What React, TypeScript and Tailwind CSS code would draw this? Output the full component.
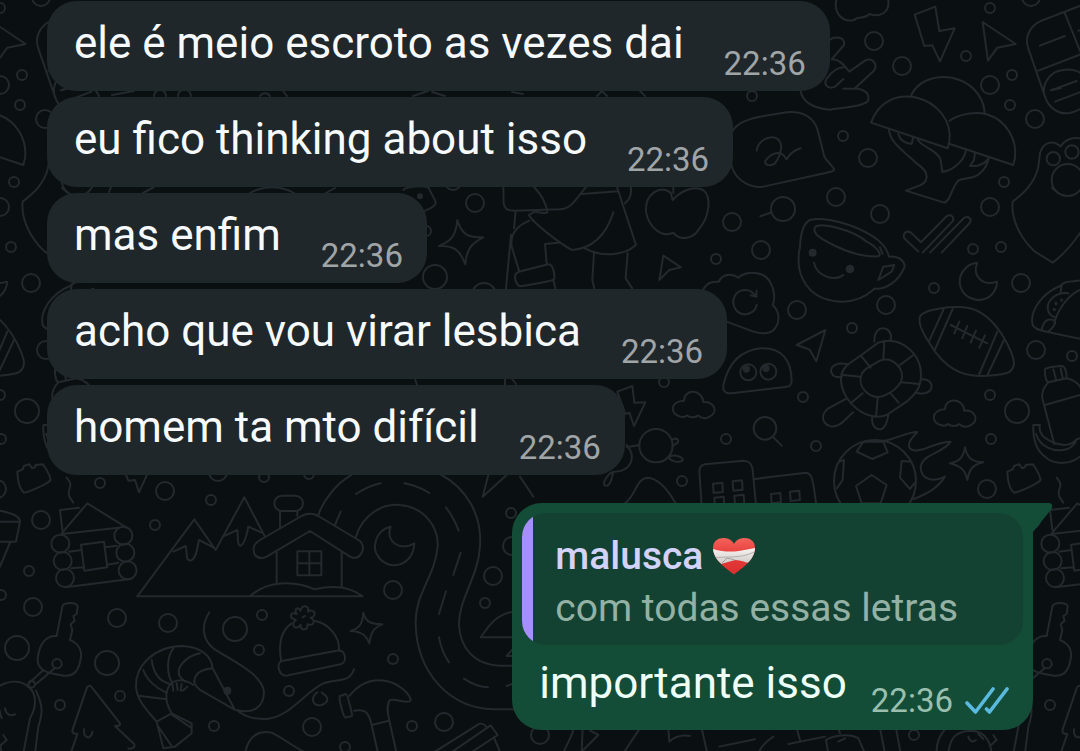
import type { ReactNode } from 'react'

type Message = {
  id: number
  text: string
  time: string
}

const received: Message[] = [
  { id: 1, text: 'ele é meio escroto as vezes dai', time: '22:36' },
  { id: 2, text: 'eu fico thinking about isso', time: '22:36' },
  { id: 3, text: 'mas enfim', time: '22:36' },
  { id: 4, text: 'acho que vou virar lesbica', time: '22:36' },
  { id: 5, text: 'homem ta mto difícil', time: '22:36' },
]

// cx, cy, r
const bubbles = [
  [874, 41, 9], [902, 66, 9], [990, 8, 5], [966, 56, 5], [1012, 75, 5], [990, 85, 9], [1010, 105, 5], [1035, 119, 9],
  [1004, 182, 5], [990, 207, 9], [843, 136, 5], [868, 158, 9], [836, 197, 9], [880, 214, 9], [783, 209, 12], [732, 222, 9],
  [752, 96, 5], [761, 250, 9], [1031, -3, 9], [973, 249, 5], [1001, 247, 5], [797, 310, 9], [886, 305, 9], [852, 328, 5],
  [934, 288, 5], [1021, 283, 9], [1036, 350, 9], [1072, 356, 5], [990, 395, 5], [1017, 411, 12], [991, 439, 5],
  [987, 489, 9], [803, 397, 5], [816, 446, 5], [726, 439, 5], [475, 203, 9], [435, 277, 12], [716, 259, 5], [426, 231, 5],
  [664, 382, 5], [484, 295, 12], [453, 182, 8], [165, 491, 9], [100, 483, 5], [211, 500, 5], [155, 525, 5], [41, 520, 9],
  [29, 571, 5], [1, 595, 5], [33, 607, 9], [117, 618, 9], [168, 623, 9], [235, 629, 12], [17, 648, 12], [107, 663, 12],
  [120, 696, 5], [60, 705, 5], [214, 726, 5], [262, 615, 5], [259, 650, 5], [218, 472, 9], [264, 477, 5], [393, 590, 9],
  [393, 659, 5], [289, 691, 5], [312, 727, 9], [345, 747, 5], [412, 726, 5], [444, 722, 9], [493, 576, 9], [485, 603, 5],
  [511, 513, 5], [512, 546, 9], [309, 474, 5], [682, 481, 5], [540, 735, 9], [914, 735, 5],
]

function Sheet({ x, y, children }: { x: number; y: number; children: ReactNode }) {
  return (
    <g transform={`translate(${x} ${y}) scale(0.3333)`} strokeWidth="6">
      {children}
    </g>
  )
}

function Wallpaper() {
  return (
    <svg aria-hidden="true" className="absolute inset-0 h-full w-full text-[#23292d]" fill="none" stroke="currentColor" strokeLinecap="round" strokeLinejoin="round">
      <g id="doodles">
        <g strokeWidth="2">
          {bubbles.map(([cx, cy, r]) => (
            <circle key={`${cx}-${cy}`} cx={cx} cy={cy} r={r} />
          ))}
          <path d="M62 90l9-2M96 91l3 5M112 95l22-4M154 96a6 6 0 0 1 12 0M178 96a6 6 0 0 1 13 0M260 96a6 6 0 0 1 10 0M283 91l4 5M413 96l15-5M432 92l13 4M512 92l11 2M597 96l5-5 5 5M640 91l5 5M62 188l6 5M111 187l-2 5M143 193l11-6M250 193a45 45 0 0 1 44 0M326 193l9-5M415 379l2 6M505 379v6M512 379l4 5" />
        </g>

        <Sheet x={720} y={0}>
          {/* cloud, bolt, arrow */}
          <path d="M350-5C338 42 370 68 402 60C415 48 435 58 448 42C475 52 510 42 505 0" />
          <path d="M584 44L646 20 658 93 704 85 660 184 637 136 613 138ZM788 66L887 132 832 143 804 182Z" />
          {/* hand */}
          <path d="M325 122C345 105 378 112 372 135L335 178C355 175 372 195 388 215L435 182C458 170 476 195 460 214L405 265C430 268 452 278 444 303C430 318 380 322 330 329C285 325 250 308 242 275M370 266H405M370 237L345 260C322 270 310 252 320 236C335 215 350 202 372 202" />
          {/* note bubble */}
          <path d="M33 402C45 375 70 360 120 350L200 337C250 332 283 355 293 390L313 470C320 485 338 495 343 510C335 517 330 515 320 518L130 560C80 566 35 530 32 480M110 452C115 420 150 405 170 415C195 430 180 470 165 490C150 500 133 495 136 483C150 462 175 452 190 465L200 478C210 460 225 450 242 445" />
          {/* mushrooms */}
          <path d="M453 368C475 305 530 282 585 292C655 308 697 365 688 425L683 445ZM572 290C590 245 640 225 695 233C750 243 790 285 794 338M688 363C720 340 770 335 800 343C860 360 892 420 885 475L880 495 690 432" />
          <path d="M507 390C510 430 560 460 590 490C635 520 625 550 590 560L558 572 672 608C692 605 695 560 715 542C735 530 760 540 780 520C795 508 802 495 806 475M593 418C600 440 655 450 662 480L667 516C700 510 730 485 738 452M535 402C540 420 555 430 575 432L579 415M765 460L762 480 750 498C775 500 795 490 806 475M121 649L155 637" />
          <path d="M595 755L553 715C547 700 560 690 573 698L603 727 680 649C693 640 706 653 697 665L608 758M630 758L731 655C743 645 758 657 749 669L665 758" />
          {/* paw */}
          <path d="M1090 418C1055 405 1030 425 1022 440C1000 418 970 425 960 460L955 500C945 550 910 580 878 605C872 660 905 720 945 755L998 788C1030 765 1060 730 1090 685" />
          <circle cx="1000" cy="476" r="20" />
          <circle cx="1056" cy="456" r="20" />
          <circle cx="1043" cy="540" r="48" />
          {/* pills */}
          <path d="M1090 14L965 62C930 77 913 110 925 145L975 290C985 322 1015 345 1050 339C1065 335 1080 330 1090 320M1035 40L1085 165M960 137L1035 108M955 212L1090 160M972 280C968 245 995 212 1030 210C1055 205 1075 212 1090 225M992 271L1070 243M1005 305L1085 275M1075 92L1090 87" />
        </Sheet>

        <Sheet x={720} y={250}>
          {/* mug */}
          <path d="M240-5C240-50 252-82 270-90C310-102 400-78 460-40C490-20 503 0 507 20M285-68C300-85 400-60 440-25C470-10 488 15 475 19C430 22 380 5 340-15C310-30 275-48 285-68ZM240-10C225 60 250 120 310 145C370 165 420 155 462 118M507 20C540 18 560 38 552 55C535 92 500 120 462 116M490 50L523 45 515 65 475 90ZM282 38C290 80 345 95 370 75M480-8L488 12" />
          <circle cx="278" cy="8" r="9" fill="currentColor" />
          <circle cx="390" cy="57" r="10" fill="currentColor" />
          {/* cloud with refresh */}
          <path d="M-50 118C-35 92-15 95-3 95C5 72 35 68 55 83C80 62 130 62 150 95C165 120 165 150 158 165C180 185 180 215 165 235C150 255 125 252 100 245L20 215M110 165C105 190 70 205 48 180C28 150 48 120 75 120C90 120 95 125 108 138M110 122L109 140 92 136" />
          <path d="M230 285L316 240 289 334 268 298Z" />
          <path d="M10 405C25 340 60 300 125 295C185 293 215 330 215 395C212 410 205 410 190 412L35 430C15 430 8 425 10 405Z" />
          <circle cx="85" cy="367" r="24" />
          <circle cx="145" cy="365" r="24" />
          <circle cx="79" cy="357" r="8" fill="currentColor" />
          <circle cx="138" cy="355" r="8" fill="currentColor" />
          {/* turtle */}
          <path d="M420 318L475 278C540 255 603 310 603 375C603 410 590 430 560 455L500 495C440 520 360 450 363 385C365 350 390 340 420 318ZM440 355L480 332C520 318 558 360 543 395C530 420 510 430 490 438C450 452 413 410 423 380C425 368 430 362 440 355ZM493 275L490 328M425 320L452 353M370 375L422 380M428 430L392 460M473 445L468 500M510 428L536 458M545 397L598 402M540 345L580 315" />
          <path d="M463 275C462 245 478 232 492 235C508 238 516 252 512 270M385 343C350 335 332 348 333 365C340 385 355 382 366 380M603 388C630 385 640 405 632 420C620 435 600 430 585 428M457 500C453 530 470 540 485 537C500 530 503 510 505 495M378 447L325 475C300 495 305 522 335 530C362 530 372 510 400 487" />
          <circle cx="135" cy="535" r="34" />
          <path d="M160 562L185 587" />
          {/* football */}
          <path d="M600 200C610 178 700 165 750 175C830 195 882 310 882 340C880 368 860 372 820 376C740 385 690 365 645 305C615 260 592 225 600 200ZM670 180L628 272M698 177L643 303M832 245L778 372M852 270L803 374M692 225L802 280M718 215L703 250M742 228L727 265M768 242L752 278M795 256L778 293" />
          <path d="M772 38C735 42 715 75 720 105C732 158 802 165 825 120C830 110 832 103 831 95C790 110 755 80 772 38Z" />
          {/* taco */}
          <path d="M1090 90C1060 97 1040 88 1020 108C965 130 928 185 938 225C945 242 975 243 1000 250L1090 268M1090 116C1040 130 1010 190 1003 220M1025 105L1022 125M1045 130C1010 125 983 150 983 175C985 193 997 200 1008 203M965 240C970 212 985 203 1005 212C1010 225 990 240 985 245" />
          <path d="M1008 160v1M1003 178v1M1025 150v1" strokeWidth="9" />
          {/* bottle and bananas */}
          <path d="M975 365C972 355 980 354 990 352L1025 347C1038 350 1040 370 1040 385L985 397C978 395 975 375 975 365ZM1000 358L1008 388M1022 355L1028 384M985 397C968 415 965 430 967 445L1003 583M1040 385C1065 390 1080 405 1090 425M975 465L1090 432" />
          <path d="M940 525H960C955 545 965 560 990 573C1020 588 1050 590 1070 568L1090 562M940 525C938 580 955 605 975 620C1000 645 1055 648 1090 610M948 552C960 590 1000 608 1040 598C1060 590 1065 580 1070 568" />
          {/* ball on fire */}
          <circle cx="465" cy="693" r="123" />
          <path d="M410 605L430 575H490L503 607 457 627ZM408 708L455 675 500 705 482 760H425ZM575 635L545 633 540 683 570 717 583 700M350 715L368 690 372 630 358 635M490 572C520 572 560 545 592 546C575 565 565 575 567 590C572 605 590 603 610 598C640 585 665 575 692 575C670 610 610 610 602 650C602 690 640 698 675 680C650 720 610 735 580 748" />
          <path d="M735 592C742 625 755 635 790 637C755 645 748 660 742 690C735 660 725 650 690 640C720 635 730 620 735 592Z" />
          <path id="cloudlet" d="M665 526C632 520 632 480 675 478C675 442 730 442 733 482C765 480 778 510 755 524C742 534 727 532 718 522C710 530 692 530 685 522C678 528 672 528 665 526Z" />
          <path d="M864 688L862 665 878 658 882 648 898 643 906 655 915 652 917 645 938 643C945 650 960 675 962 690C955 702 890 728 882 728C872 720 866 700 864 688Z" />
          <path d="M1010 683C1037 708 1005 722 1020 743L1030 758" />
        </Sheet>

        <Sheet x={400} y={180}>
          {/* walking figure */}
          <path d="M310 15L311 70C315 90 325 92 345 92L480 88C520 85 530 50 560 20M400 18C425 45 440 70 442 98C430 102 410 92 400 97L387 105C400 130 480 190 515 210C580 205 620 160 640 97M555 205C600 230 670 230 708 195L650 18M545 42L655 34M347 92L342 145M388 122C345 140 330 165 335 200L358 275M333 165L318 325M440 250L435 192 475 188M345 290C345 278 355 275 365 273L445 253C460 252 465 285 462 298C455 305 400 312 360 319C350 315 345 300 345 290ZM460 300L466 325M582 220L577 300 583 325M683 220L677 295 697 325M692 18C697 45 688 60 675 70" />
          <path d="M812 38C780 15 735 40 738 95C745 140 785 175 820 158C840 185 880 175 895 150C930 110 935 50 910 30C880 15 840 35 818 60L812 38M820 20V40" />
          <path d="M790 227L843 262 808 270 778 300Z" />
          <path d="M172 120C185 165 205 172 250 172C215 190 200 205 196 253C180 210 160 195 117 198C150 185 168 170 172 120Z" />
          <path d="M10 30C20 20 60 15 85 22L107 65C110 78 85 88 75 92" />
          <circle cx="60" cy="49" r="6" fill="currentColor" />
        </Sheet>

        <Sheet x={560} y={370}>
          {/* bolt, sunglasses, buildings */}
          <path d="M172 65L217 48 223 98 256 97 222 168 208 128 196 132Z" />
          <use href="#cloudlet" x="-303" y="-386" />
          <circle cx="288" cy="227" r="50" />
          <path d="M335 210C350 200 362 212 350 220L337 228M325 262C340 250 375 262 368 272C355 280 335 275 325 262M238 225L200 232M200 225C230 260 215 302 165 305M160 305C145 310 128 335 133 345C148 355 155 330 160 305" />
          <path d="M195 400C225 380 230 325 262 323C300 325 330 370 347 400M425 405L418 305C418 292 425 285 435 283L550 272C568 273 576 280 578 300L588 405M585 327L738 308C755 310 758 320 769 405M459 341L487 338 489 366 461 369ZM518 334L546 331 548 359 520 362ZM463 383L491 380 493 408 465 411ZM523 377L551 374 553 402 525 405ZM633 372L661 369 663 397 635 400ZM690 365L718 362 720 390 692 393Z" />
        </Sheet>

        <Sheet x={0} y={460}>
          {/* log cabin */}
          <path d="M0 152C25 158 60 165 60 185L48 245H0M0 185H60M30 248L0 320M237 143L180 150 187 210M185 220L262 130 380 203M185 222L355 203M207 275L245 270M213 325L250 322M315 262L350 257M322 314L355 308M197 382L385 358M243 254L312 245 322 322 253 332Z" />
          {[[181, 251], [188, 303], [195, 354], [370, 227], [376, 278], [383, 331]].map(([cx, cy]) => (
            <circle key={cx} cx={cx} cy={cy} r="27" />
          ))}
          {/* mountains */}
          <path d="M412 409L583 178 647 270 733 112 795 230M520 275L557 258C562 265 555 302 570 302C590 300 592 260 597 240L640 262M668 230L712 210C715 220 710 255 720 257C735 255 742 215 745 200L790 220M378 45L385 62 405 60 417 97 442 42" />
          {/* key and boot */}
          <path d="M170 528L187 440C190 425 232 425 233 440L230 462 220 468 224 482 212 493 217 510 210 540C235 550 245 570 243 590C238 630 225 650 190 647C150 640 110 635 113 595C118 550 140 525 170 528ZM165 624L108 672M128 632L88 668" />
          <circle cx="171" cy="611" r="14" />
          <circle cx="95" cy="673" r="10" />
          <path d="M-5 680C30 660 65 660 90 685C110 705 110 740 90 775L70 880M108 692C130 740 128 760 115 800L105 880M15 745C18 762 30 770 45 763M-5 738L5 775M10 825L20 840 0 858" />
          <path d="M212 880L232 822C222 822 215 820 218 808L260 685C265 675 272 675 278 685L360 790C362 797 355 798 345 798L403 853C407 862 395 868 385 866M252 808C250 838 275 840 277 815" />
          {/* shrimp */}
          <path d="M705 750L600 690C582 675 580 665 585 655C590 635 610 628 638 625ZM638 625C635 590 605 560 545 558C460 560 405 620 408 680C410 720 440 750 470 785L515 760C500 735 495 710 502 690C510 660 545 650 580 675M470 785L490 865 525 860 575 820V790L515 760M430 630C440 660 470 685 497 697M455 600C460 640 480 665 510 672M520 565C500 590 500 640 515 665M600 580C555 590 525 625 540 650L555 665M420 708L495 717M475 800L515 858M517 765L572 802M517 672L520 692M530 670L533 690M545 672L542 692M562 680L548 692" />
          <circle cx="682" cy="692" r="9" fill="currentColor" />
          <path d="M628 457C600 500 610 540 640 565C700 605 785 640 792 695C792 745 755 762 710 750C740 775 770 777 800 777" />
        </Sheet>

        <Sheet x={260} y={460}>
          {/* house */}
          <rect x="43" y="107" width="86" height="46" rx="23" />
          <path d="M60 153V200M112 153V168M-15 285C-5 297 5 297 20 290L150 213 270 290C300 307 322 262 300 243L175 168C160 160 140 160 125 168L0 240C-25 255-20 275-15 285M50 273V370M245 275V380M112 274H184V346H112ZM148 274V346M112 310H184M-30 409C20 362 100 360 165 388C220 375 270 380 308 409H-368" />
          {/* road */}
          <path d="M175 165C190 120 230 70 275 45M540 42C620 85 667 165 660 260C655 350 595 420 597 495C600 560 640 615 720 617H770M287 232C310 160 370 130 420 135C490 140 537 200 533 260C525 350 465 400 467 490C470 640 570 745 700 748H770M288 102C310 88 335 75 362 70M433 70C460 75 485 85 508 99M558 142C575 165 588 190 596 212M602 278L580 345M558 394L537 462M537 532C542 560 552 585 567 607M612 656C635 672 655 680 684 682M740 678L770 667M242 155L225 195" />
          <path d="M392 200C345 210 335 265 355 290C385 335 460 320 463 250C420 275 375 245 392 200Z" />
          <path d="M685 45L668 110 740 45M780 50L820 110M760 455C700 465 680 510 662 532H770M760 565L740 588H770" />
          {/* beanie */}
          <path d="M63 600C55 550 65 510 95 490M165 483C205 490 240 530 237 570M65 603L230 572C258 568 262 603 245 612L80 647C55 648 48 610 65 603Z" />
          <path d="M122 452C122 435 150 433 144 455C165 442 172 470 152 473C172 485 155 500 143 492C143 515 120 512 122 495C105 515 90 492 108 480C85 475 90 452 110 462C100 445 115 440 122 452ZM128 472L135 468" />
          <path d="M310 458C318 488 335 493 367 493C340 503 332 520 328 550C318 525 305 515 272 513C300 505 308 490 310 458Z" />
          <path d="M20 777C90 770 130 700 190 670C240 655 268 668 282 628M172 697C148 715 160 740 185 735C210 725 205 710 185 698M-45 880C-35 825 0 810 35 818C70 835 100 860 135 877" />
          {/* hammer and pencil */}
          <path d="M240 708L258 702C262 702 278 765 276 768L256 773C250 770 235 715 240 708ZM268 708C300 668 340 655 380 663C420 672 452 705 452 722C440 735 400 710 388 722C378 740 384 760 388 782L335 795C325 750 310 748 282 752M335 795L354 880M388 782L410 880" />
          <path d="M525 875L655 793C665 788 675 793 680 802M570 880L692 796 713 825 630 880M703 835L722 880" />
        </Sheet>

        <Sheet x={510} y={490}>
          <path d="M160 790C170 760 190 735 190 715M218 715L215 785 265 735 240 722M340 790L390 715M475 715L478 755C500 735 520 735 540 738M575 715L592 790M628 770L735 748M745 790C755 765 775 750 790 740" />
        </Sheet>
        <Sheet x={790} y={490}>
          <path d="M20 715L30 750M-5 762L105 740M145 715L150 730M108 750C130 735 180 730 205 745L225 790M108 750L115 790M145 755L165 745M270 715L285 790M318 715L332 790M440 790C438 755 450 735 465 718M475 790C480 740 500 725 540 722C580 722 600 745 605 790M535 740C540 757 550 757 558 750M565 732L580 747" />
        </Sheet>
      </g>
      <use href="#doodles" x="-990" />
      <use href="#doodles" x="990" />
    </svg>
  )
}

function MendingHeart() {
  return (
    <svg role="img" aria-label="coração remendado" viewBox="0 0 42 38" className="h-[38px] w-[42px]">
      <defs>
        <linearGradient id="heart" x1="0" y1="0" x2="0" y2="1">
          <stop offset="0" stopColor="#f4655c" />
          <stop offset="0.5" stopColor="#e53a38" />
          <stop offset="1" stopColor="#d9302f" />
        </linearGradient>
        <linearGradient id="gauze" x1="0" y1="0" x2="0" y2="1">
          <stop offset="0" stopColor="#f7f4f2" />
          <stop offset="1" stopColor="#cfcac8" />
        </linearGradient>
        <clipPath id="heart-shape">
          <path d="M21 37.500C13 31 0 23 0 11C0 4 5 1 10.500 1C15 1 19 3 21 7C23 3 27 1 31.500 1C37 1 42 4 42 11C42 23 29 31 21 37.500Z" />
        </clipPath>
      </defs>
      <g clipPath="url(#heart-shape)">
        <rect width="42" height="38" fill="url(#heart)" />
        <path d="M0 12C10 15 18 15 26 14L42 11V26C34 27 29 23 22 23L8 27 0 20Z" fill="url(#gauze)" />
        <path d="M1 21C12 19 28 22 41 15" fill="none" stroke="#b5afad" strokeWidth="1" />
        <path d="M9 26L14 21 22 23" fill="none" stroke="#a59f9d" strokeWidth="1" />
      </g>
    </svg>
  )
}

function ReadTicks() {
  return (
    <svg role="img" aria-label="Lida" viewBox="0 0 44 28" className="h-[28px] w-[44px]" fill="none" stroke="#5ab9de" strokeWidth="3.600" strokeLinecap="round" strokeLinejoin="round">
      <path d="M2 16L10.500 25 28 2M21.500 22L24.500 25 42 2" />
    </svg>
  )
}

function ReceivedBubble({ message }: { message: Message }) {
  return (
    <article className="flex items-end gap-10 rounded-[30px] bg-[#20272a] pr-6 pl-[27px]">
      <p className="pt-[17px] pb-[23px] text-[44px] leading-[50px] text-[#f6fafd]">{message.text}</p>
      <time className="pb-[7px] text-[33px] leading-10 text-[#a0a5a8]">{message.time}</time>
    </article>
  )
}

function ReplyBubble() {
  return (
    <article className="relative mt-[22px] self-end rounded-[30px] rounded-tr-none bg-[#144d37] px-[10px] pt-[10px]">
      <svg aria-hidden="true" viewBox="0 0 20 30" className="absolute top-0 left-full h-[30px] w-5" fill="#144d37">
        <path d="M-1 0H16C19 0 20 3 18.500 6L0 29H-1Z" />
      </svg>
      <blockquote className="flex overflow-hidden rounded-3xl bg-[#144232]">
        <span className="w-[11px] bg-[#a68ffc]" />
        <div className="pt-[17px] pb-[11px] pl-[22px]">
          <p className="flex items-center gap-[10px] text-[39px] leading-[52px] font-medium text-[#d3d2fb]">
            malusca <MendingHeart />
          </p>
          <p className="text-[39px] leading-[52px] text-[#93b1a4]">com todas essas letras</p>
        </div>
      </blockquote>
      <div className="flex items-end gap-6 pr-[14px] pl-[17px]">
        <p className="pt-[13px] pb-[22px] text-[44px] leading-[50px] text-[#eefff7]">importante isso</p>
        <div className="flex items-center gap-3 pb-[9px]">
          <time className="text-[33px] leading-10 text-[#9abfae]">22:36</time>
          <ReadTicks />
        </div>
      </div>
    </article>
  )
}

export default function App() {
  return (
    <main className="relative min-h-screen overflow-hidden bg-[#0a0f12] font-['Roboto',sans-serif]">
      <Wallpaper />
      <section className="relative flex flex-col items-start gap-[6px] px-[47px] pt-px pb-5">
        {received.map((message) => (
          <ReceivedBubble key={message.id} message={message} />
        ))}
        <ReplyBubble />
      </section>
    </main>
  )
}
